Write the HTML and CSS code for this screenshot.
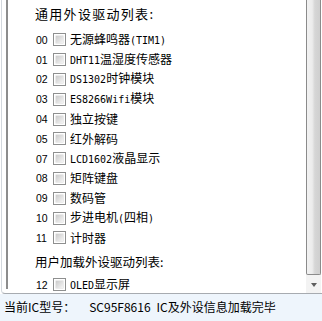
FILE: index.html
```html
<!DOCTYPE html>
<html>
<head>
<meta charset="utf-8">
<link rel="stylesheet" href="styles.css">
</head>
<body>
<div class="panel">
  <div class="list">
    <div class="title t1">通用外设驱动列表:</div>
    <div class="rows">
      <div class="row"><span class="num">00</span><span class="cb"></span><span class="lbl">无源蜂鸣器<span class="en">(TIM1)</span></span></div>
      <div class="row"><span class="num">01</span><span class="cb"></span><span class="lbl"><span class="en">DHT11</span>温湿度传感器</span></div>
      <div class="row"><span class="num">02</span><span class="cb"></span><span class="lbl"><span class="en">DS1302</span>时钟模块</span></div>
      <div class="row"><span class="num">03</span><span class="cb"></span><span class="lbl"><span class="en">ES8266Wifi</span>模块</span></div>
      <div class="row"><span class="num">04</span><span class="cb"></span><span class="lbl">独立按键</span></div>
      <div class="row"><span class="num">05</span><span class="cb"></span><span class="lbl">红外解码</span></div>
      <div class="row"><span class="num">07</span><span class="cb"></span><span class="lbl"><span class="en">LCD1602</span>液晶显示</span></div>
      <div class="row"><span class="num">08</span><span class="cb"></span><span class="lbl">矩阵键盘</span></div>
      <div class="row"><span class="num">09</span><span class="cb"></span><span class="lbl">数码管</span></div>
      <div class="row"><span class="num">10</span><span class="cb"></span><span class="lbl">步进电机<span class="en">(</span>四相<span class="en">)</span></span></div>
      <div class="row"><span class="num">11</span><span class="cb"></span><span class="lbl">计时器</span></div>
    </div>
    <div class="title t2">用户加载外设驱动列表:</div>
    <div class="rows r2">
      <div class="row"><span class="num">12</span><span class="cb"></span><span class="lbl"><span class="en">OLED</span>显示屏</span></div>
    </div>
  </div>
  <div class="scrollbar">
    <div class="thumb"></div>
    <div class="btn"><span class="arrow"></span></div>
  </div>
</div>
<div class="status"><span class="s1">当前IC型号：</span><span class="s2">SC95F8616</span><span class="s3">IC及外设信息加载完毕</span></div>
</body>
</html>
```

FILE: styles.css
```css
html, body {
  margin: 0;
  padding: 0;
  background: #ffffff;
}
body {
  width: 322px;
  height: 321px;
  overflow: hidden;
  font-family: "Noto Sans CJK SC", "Noto Sans", sans-serif;
  color: #000;
}
.panel {
  display: flex;
  height: 294px;
  box-sizing: border-box;
  margin-left: 1px;
  border-left: 1px solid #d3d8de;
  border-bottom: 1px solid #a7abb0;
  border-bottom-left-radius: 4px;
}
.list {
  flex: 1;
  margin-left: 4px;
  border-left: 2px solid #8d8d8d;
  padding-left: 27px;
  padding-top: 4px;
  margin-bottom: 4px;
}
.title {
  height: 20px;
  line-height: 20px;
  font-size: 13px;
  white-space: nowrap;
}
.t1 { letter-spacing: 1.3px; }
.t2 { margin-top: 4px; font-size: 12.5px; }
.rows {
  margin-top: 6px;
}
.r2 { margin-top: 3px; }
.row {
  display: flex;
  align-items: center;
  height: 19.8px;
  white-space: nowrap;
}
.num {
  width: 17px;
  font-family: "Liberation Sans", sans-serif;
  font-size: 10.5px;
  margin-left: 1px;
}
.cb {
  width: 13px;
  height: 13px;
  box-sizing: border-box;
  border: 1px solid #8e8f8f;
  background: #fff;
  position: relative;
  flex: none;
}
.cb::after {
  content: "";
  position: absolute;
  left: 2px;
  top: 2px;
  width: 7px;
  height: 7px;
  background: linear-gradient(135deg, #cbcbcb, #f4f4f4);
  box-shadow: 0 0 0 0.5px #d6d6d6;
}
.lbl {
  margin-left: 4px;
  font-size: 12px;
  line-height: 14px;
}
.en {
  font-family: "DejaVu Sans Mono", monospace;
  font-size: 10px;
}
.scrollbar {
  width: 15px;
  margin-right: 1px;
  display: flex;
  flex-direction: column;
  background: #f3f3f3;
}
.thumb {
  flex: 1;
  box-sizing: border-box;
  border: 1px solid #8b8b8b;
  border-top: none;
  border-radius: 0 0 2px 2px;
  background: linear-gradient(to right, #f2f2f2 0%, #ececec 40%, #d6d6d6 60%, #cfcfcf 100%);
  margin-bottom: 1px;
}
.btn {
  height: 17px;
  display: flex;
  align-items: center;
  justify-content: center;
  background: #f3f3f3;
}
.arrow {
  width: 0;
  height: 0;
  border-left: 3.5px solid transparent;
  border-right: 3.5px solid transparent;
  border-top: 4px solid #5e5e5e;
}
.status {
  display: flex;
  height: 27px;
  line-height: 26px;
  background: #eef5fc;
  font-size: 12px;
  padding-left: 4px;
  white-space: nowrap;
}
.s2 { margin-left: 14px; }
.s3 { margin-left: 6px; }
```
